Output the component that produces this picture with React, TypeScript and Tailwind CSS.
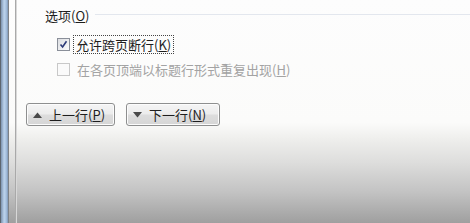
import React from "react";

const font = { fontFamily: '"Noto Sans CJK SC", "Noto Sans", sans-serif' };

function Checkbox({ checked, disabled }: { checked?: boolean; disabled?: boolean }) {
  return (
    <div
      className={
        "w-[13px] h-[13px] border flex items-center justify-center shrink-0 " +
        (disabled
          ? "border-[#c8c8c8] bg-[#fafafa]"
          : "border-[#8a8f99] bg-[linear-gradient(135deg,#dcdee2,#fbfbfc)]")
      }
    >
      {checked && (
        <svg width="9" height="9" viewBox="0 0 9 9">
          <path d="M1.5 4.5 L3.6 7 L7.5 1.2" fill="none" stroke="#2c3a78" strokeWidth="1.6" />
        </svg>
      )}
    </div>
  );
}

function Btn({ up, label, acc }: { up?: boolean; label: string; acc: string }) {
  return (
    <div className="h-[23px] rounded-[3px] border border-[#8e8f8f] bg-[linear-gradient(to_bottom,#f5f5f5_0%,#ececec_48%,#dddddd_52%,#d6d6d6_100%)] shadow-[inset_0_0_0_1px_#fcfcfc] flex items-center pl-[6px] gap-[7px] whitespace-nowrap">
      <svg width="9" height="6" viewBox="0 0 9 6" className="shrink-0">
        {up ? <path d="M0 6 L4.5 0.5 L9 6 Z" fill="#4a4a4a" /> : <path d="M0 0 L4.5 5.5 L9 0 Z" fill="#4a4a4a" />}
      </svg>
      <span className="text-[13px] leading-none text-[#1e1e1e] whitespace-nowrap" style={font}>
        {label}(<span className="underline">{acc}</span>)
      </span>
    </div>
  );
}

export default function App() {
  return (
    <div className="w-[470px] h-[223px] overflow-hidden flex bg-[linear-gradient(to_bottom,#fdfdfd_0%,#fbfbfa_55%,#efefed_62%,#dddddc_73%,#c3c3c3_86%,#9f9f9f_100%)]" style={font}>
      <div className="w-px h-full bg-[#5d6670]" />
      <div className="w-[7px] h-full bg-[linear-gradient(to_right,#7c93b0,#bcd3ec_45%,#a6c0de_75%,#8098b6)]" />
      <div className="w-px h-full bg-[#7d8186]" />
      <div className="w-[6px] h-full" />
      <div className="w-px h-full bg-[#a9a9a9]" />
      <div className="w-px h-full bg-[#d8d8d8]" />
      <div className="flex-1 flex flex-col pl-[28px] pt-[6px]">
        <div className="flex items-center h-[18px]">
          <span className="text-[13px] text-[#1e1e1e] leading-none whitespace-nowrap">
            选项(<span className="underline">O</span>)
          </span>
          <div className="flex-1 ml-[6px] h-px bg-[#e3e7ee] mt-[-2px]" />
        </div>
        <div className="flex items-center mt-[11px] ml-[12px] h-[19px]">
          <Checkbox checked />
          <div className="ml-[3px] border border-dotted border-[#444] px-[2px] h-[19px] flex items-center">
            <span className="text-[13px] text-[#1e1e1e] leading-none whitespace-nowrap">
              允许跨页断行(<span className="underline">K</span>)
            </span>
          </div>
        </div>
        <div className="flex items-center mt-[6px] ml-[12px] h-[19px]">
          <Checkbox disabled />
          <span className="ml-[7px] text-[13px] text-[#a3a3a3] leading-none whitespace-nowrap">
            在各页顶端以标题行形式重复出现(<span className="underline">H</span>)
          </span>
        </div>
        <div className="flex mt-[24px] ml-[-19px] gap-[11px]">
          <div className="w-[89px]"><Btn up label="上一行" acc="P" /></div>
          <div className="w-[94px]"><Btn label="下一行" acc="N" /></div>
        </div>
      </div>
    </div>
  );
}
